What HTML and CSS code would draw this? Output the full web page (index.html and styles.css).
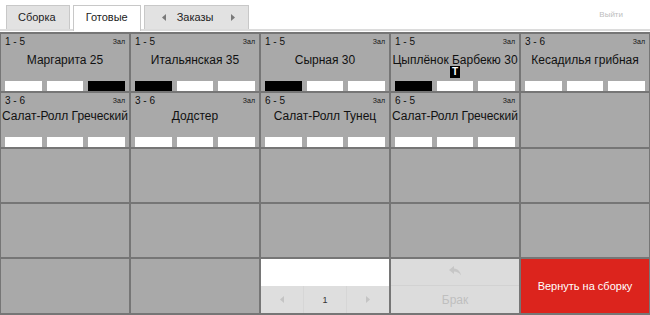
FILE: index.html
```html
<!DOCTYPE html>
<html>
<head>
    <title>Готовые</title>
    <link rel="stylesheet" href="styles.css">
</head>
<body>
    <div class="tabs">
        <div class="tab">Сборка</div>
        <div class="tab active">Готовые</div>
        <div class="tab orders">
            <svg class="arrow" width="4" height="7" viewBox="0 0 4 7"><path d="M4 0 L0 3.5 L4 7 Z"/></svg>
            <span>Заказы</span>
            <svg class="arrow" width="4" height="7" viewBox="0 0 4 7"><path d="M0 0 L4 3.5 L0 7 Z"/></svg>
        </div>
        <div class="logout">Выйти</div>
    </div>

    <div class="board">
        <!-- row 1 -->
        <div class="cell">
            <div class="cell-head"><span>1 - 5</span><span class="place">Зал</span></div>
            <div class="name">Маргарита 25</div>
            <div class="marks"></div>
            <div class="bars"><div class="bar"></div><div class="bar"></div><div class="bar done"></div></div>
        </div>
        <div class="cell">
            <div class="cell-head"><span>1 - 5</span><span class="place">Зал</span></div>
            <div class="name">Итальянская 35</div>
            <div class="marks"></div>
            <div class="bars"><div class="bar done"></div><div class="bar"></div><div class="bar"></div></div>
        </div>
        <div class="cell">
            <div class="cell-head"><span>1 - 5</span><span class="place">Зал</span></div>
            <div class="name">Сырная 30</div>
            <div class="marks"></div>
            <div class="bars"><div class="bar done"></div><div class="bar"></div><div class="bar"></div></div>
        </div>
        <div class="cell">
            <div class="cell-head"><span>1 - 5</span><span class="place">Зал</span></div>
            <div class="name">Цыплёнок Барбекю 30</div>
            <div class="marks"><span class="badge">T</span></div>
            <div class="bars"><div class="bar done"></div><div class="bar"></div><div class="bar"></div></div>
        </div>
        <div class="cell">
            <div class="cell-head"><span>3 - 6</span><span class="place">Зал</span></div>
            <div class="name">Кесадилья грибная</div>
            <div class="marks"></div>
            <div class="bars"><div class="bar"></div><div class="bar"></div><div class="bar"></div></div>
        </div>

        <!-- row 2 -->
        <div class="cell">
            <div class="cell-head"><span>3 - 6</span><span class="place">Зал</span></div>
            <div class="name">Салат-Ролл Греческий</div>
            <div class="marks"></div>
            <div class="bars"><div class="bar"></div><div class="bar"></div><div class="bar"></div></div>
        </div>
        <div class="cell">
            <div class="cell-head"><span>3 - 6</span><span class="place">Зал</span></div>
            <div class="name">Додстер</div>
            <div class="marks"></div>
            <div class="bars"><div class="bar"></div><div class="bar"></div><div class="bar"></div></div>
        </div>
        <div class="cell">
            <div class="cell-head"><span>6 - 5</span><span class="place">Зал</span></div>
            <div class="name">Салат-Ролл Тунец</div>
            <div class="marks"></div>
            <div class="bars"><div class="bar"></div><div class="bar"></div><div class="bar"></div></div>
        </div>
        <div class="cell">
            <div class="cell-head"><span>6 - 5</span><span class="place">Зал</span></div>
            <div class="name">Салат-Ролл Греческий</div>
            <div class="marks"></div>
            <div class="bars"><div class="bar"></div><div class="bar"></div><div class="bar"></div></div>
        </div>
        <div class="cell"></div>

        <!-- rows 3, 4 -->
        <div class="cell"></div>
        <div class="cell"></div>
        <div class="cell"></div>
        <div class="cell"></div>
        <div class="cell"></div>
        <div class="cell"></div>
        <div class="cell"></div>
        <div class="cell"></div>
        <div class="cell"></div>
        <div class="cell"></div>

        <!-- row 5 -->
        <div class="cell"></div>
        <div class="cell"></div>
        <div class="cell pager-cell">
            <div class="pager-top"></div>
            <div class="pager">
                <div class="page-btn"><svg width="4" height="7" viewBox="0 0 4 7"><path d="M4 0 L0 3.5 L4 7 Z"/></svg></div>
                <div class="page-btn page-num">1</div>
                <div class="page-btn"><svg width="4" height="7" viewBox="0 0 4 7"><path d="M0 0 L4 3.5 L0 7 Z"/></svg></div>
            </div>
        </div>
        <div class="cell reject">
            <div class="reject-top">
                <svg width="12" height="10" viewBox="0 0 12 10"><path d="M5 0 L0 4 L5 8 V5.6 C8 5.6 10 6.6 12 9.6 C11.4 5.6 9 3 5 2.6 Z"/></svg>
            </div>
            <div class="reject-bottom">Брак</div>
        </div>
        <div class="cell return-btn">Вернуть на сборку</div>
    </div>
</body>
</html>
```

FILE: styles.css
```css
body {
    margin: 0;
    font-family: 'Liberation Sans', Arial, sans-serif;
    background: #fff;
    color: #111;
    overflow: hidden;
}
.tabs {
    display: flex;
    align-items: flex-end;
    height: 29px;
    padding-left: 6px;
    border-bottom: 2px solid #dcdcdc;
    margin-bottom: 1px;
}
.tab {
    height: 23px;
    line-height: 23px;
    padding: 0 13px 0 11px;
    margin-right: 3px;
    font-size: 11px;
    color: #222;
    background: #e2e2e2;
    border: 1px solid #c8c8c8;
    border-bottom: none;
}
.tab.active {
    background: #fff;
    height: 25px;
    margin-bottom: -2px;
    padding: 0 12px;
}
.tab.orders {
    display: flex;
    align-items: center;
    padding: 0 13px 0 17px;
}
.tab.orders span {
    margin: 0 18px 0 11px;
}
.arrow path {
    fill: #7a7a7a;
}
.logout {
    align-self: flex-start;
    margin-left: auto;
    margin-right: 27px;
    padding-top: 10px;
    font-size: 8px;
    color: #bdbdbd;
}
.board {
    display: grid;
    grid-template-columns: repeat(5, 1fr);
    grid-template-rows: 57px 54px 53px 53px 54px;
    gap: 2px;
    background: #767676;
    border-style: solid;
    border-color: #767676;
    border-width: 2px 1px 2px 1px;
}
.cell {
    display: flex;
    flex-direction: column;
    background: #a9a9a9;
    min-width: 0;
}
.cell-head {
    display: flex;
    justify-content: space-between;
    padding: 2px 4px 0 4px;
    height: 12px;
    line-height: 12px;
    font-size: 10px;
}
.place {
    font-size: 7px;
}
.name {
    margin-top: auto;
    font-size: 12px;
    line-height: 14px;
    text-align: center;
    white-space: nowrap;
}
.marks {
    display: flex;
    justify-content: center;
    height: 12px;
    margin-top: -1px;
}
.badge {
    width: 10px;
    height: 12px;
    line-height: 12px;
    text-align: center;
    background: #000;
    color: #fff;
    font-size: 10px;
    font-weight: bold;
}
.bars {
    display: flex;
    gap: 5px;
    padding: 3px 4px 0 4px;
}
.bar {
    flex: 1;
    height: 10px;
    background: #fff;
}
.bar.done {
    background: #000;
}
.pager-top {
    flex: 1;
    background: #fff;
}
.pager {
    display: flex;
    height: 27px;
    background: #dedede;
}
.page-btn {
    flex: 1;
    display: flex;
    align-items: center;
    justify-content: center;
    border-left: 1px solid #d6d6d6;
    font-size: 9px;
    color: #333;
}
.page-btn:first-child {
    border-left: none;
}
.page-btn path {
    fill: #c4c4c4;
}
.reject {
    background: #dcdcdc;
}
.reject-top {
    flex: 1;
    display: flex;
    align-items: center;
    justify-content: center;
    border-bottom: 1px solid #d2d2d2;
    padding-bottom: 2px;
}
.reject-top path {
    fill: #c6c6c6;
}
.reject-bottom {
    height: 27px;
    line-height: 29px;
    text-align: center;
    font-size: 12px;
    color: #bfbfbf;
}
.return-btn {
    justify-content: center;
    align-items: center;
    background: #dc241d;
    color: #fff;
    font-size: 11px;
}
```
